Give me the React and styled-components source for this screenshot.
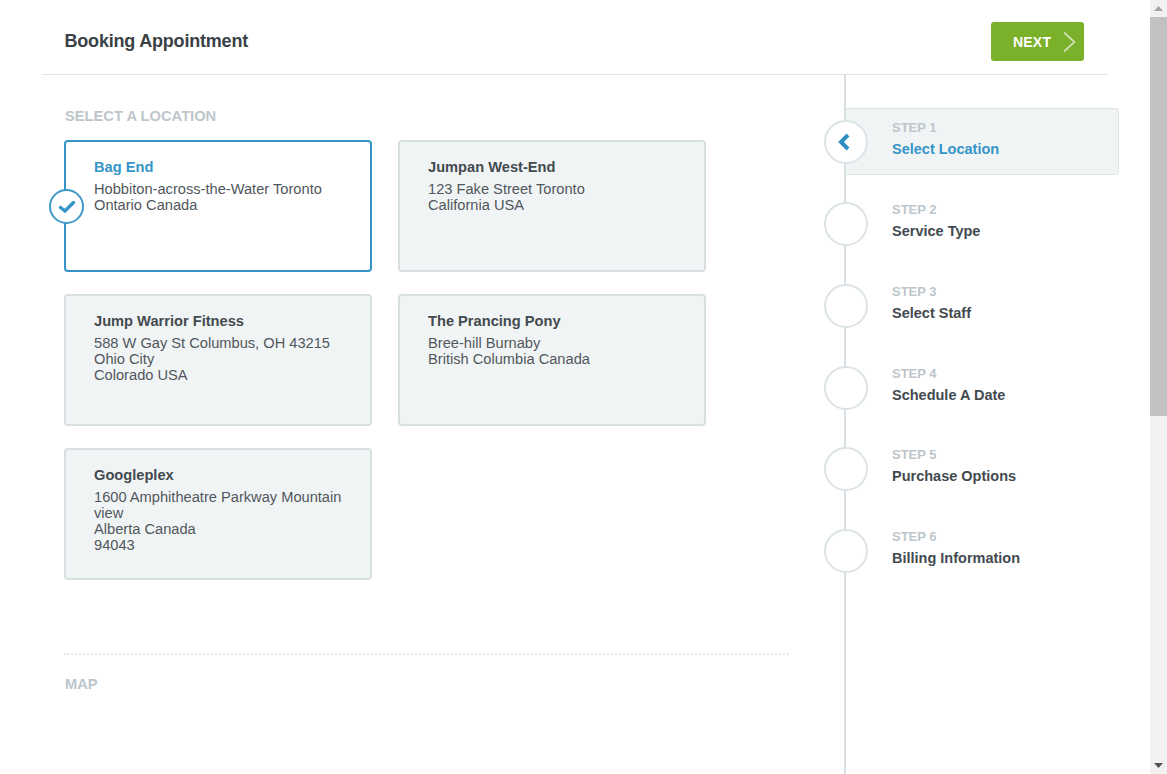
import React from 'react';
import styled, { createGlobalStyle } from 'styled-components';

const GlobalStyle = createGlobalStyle`
  html, body {
    margin: 0;
    height: 100%;
    overflow: hidden;
    background: #ffffff;
    font-family: "Liberation Sans", Arial, sans-serif;
    color: #434a4f;
  }
`

const Page = styled.div`
  display: flex;
  height: 774px;
  overflow: hidden;
`
const Shell = styled.div`
  width: 1150px;
  display: flex;
  flex-direction: column;
`
const Header = styled.header`
  height: 75px;
  margin: 0 42px;
  box-sizing: border-box;
  border-bottom: 1px solid #dde2e4;
  display: flex;
  align-items: center;
  justify-content: space-between;
  padding: 10px 24px 0 22.5px;
`
const Title = styled.h1`
  margin: 0 0 3px;
  font-size: 18px;
  line-height: 24px;
  font-weight: bold;
  letter-spacing: -0.2px;
  color: #3a4145;
`
const NextButton = styled.button`
  width: 93px;
  height: 39px;
  margin-top: -1px;
  border: 0;
  border-radius: 3px;
  background: #7ab02a;
  color: #ffffff;
  font-family: inherit;
  font-size: 14px;
  font-weight: bold;
  letter-spacing: 0.2px;
  display: flex;
  align-items: center;
  padding: 0 8px 0 22px;
  justify-content: space-between;
`
const Body = styled.div`
  flex: 1;
  display: flex;
  min-height: 0;
`
const Main = styled.main`
  width: 725px;
  margin: 0 55px 0 64px;
  display: flex;
  flex-direction: column;
`
const SectionLabel = styled.h2`
  margin: 0;
  padding: ${props => props.top}px 0 0 1px;
  font-size: 14.7px;
  line-height: 20px;
  font-weight: bold;
  color: #bdc6cb;
`
const CardGrid = styled.div`
  display: grid;
  grid-template-columns: 308px 308px;
  grid-auto-rows: 132px;
  column-gap: 26px;
  row-gap: 22px;
  margin-top: 14px;
`
const Card = styled.div`
  position: relative;
  box-sizing: border-box;
  padding: 17px 28px 0;
  border: 2px solid ${props => props.selected ? "#3595c8" : "#d8dfe2"};
  border-radius: 4px;
  background: ${props => props.selected ? "#ffffff" : "#f1f4f5"};
`
const CardName = styled.div`
  font-size: 14.65px;
  line-height: 16px;
  font-weight: bold;
  margin-bottom: 6px;
  color: ${props => props.selected ? "#3595c8" : "#434a4f"};
`
const CardLine = styled.div`
  font-size: 14.65px;
  line-height: 16px;
  color: #50575c;
`
const CheckBadge = styled.span`
  position: absolute;
  left: -17px;
  top: 47px;
  width: 35px;
  height: 35px;
  box-sizing: border-box;
  border: 2px solid #3f9ac9;
  border-radius: 50%;
  background: #ffffff;
  display: flex;
  align-items: center;
  justify-content: center;
`
const Divider = styled.div`
  margin-top: 73px;
  border-top: 2px dotted #e4e8ea;
`
const Sidebar = styled.aside`
  width: 275px;
  border-left: 2px solid #d8dfe2;
  box-sizing: border-box;
  padding-top: 33px;
  display: flex;
  flex-direction: column;
  flex-shrink: 0;
  height: 699px;
`
const Step = styled.div`
  display: flex;
  align-items: center;
  box-sizing: border-box;
  height: ${props => props.active ? 67 : 81.75}px;
  margin-bottom: ${props => props.active ? 8.25 : 0}px;
  border: ${props => props.active ? "1px solid #dde2e4" : "0"};
  border-left: 0;
  border-radius: 0 4px 4px 0;
  background: ${props => props.active ? "#f1f4f5" : "transparent"};
`
const StepCircle = styled.span`
  width: 44px;
  height: 44px;
  flex-shrink: 0;
  box-sizing: border-box;
  margin-left: -22px;
  border: 2px solid #dce3e6;
  border-radius: 50%;
  background: #ffffff;
  display: flex;
  align-items: center;
  justify-content: center;
`
const BackIcon = styled.svg`
  margin-right: 5px;
`
const StepText = styled.div`
  margin: 0 0 6px 24px;
`
const StepNumber = styled.div`
  font-size: 13px;
  line-height: 14px;
  font-weight: bold;
  color: #bdc6cb;
`
const StepName = styled.div`
  margin-top: 6px;
  font-size: 14.5px;
  line-height: 16px;
  font-weight: bold;
  color: ${props => props.active ? "#3595c8" : "#434a4f"};
`
const ScrollBar = styled.div`
  width: 17px;
  background: #f1f1f1;
  display: flex;
  flex-direction: column;
  align-items: center;
`
const ScrollArrow = styled.div`
  height: 17px;
  flex-shrink: 0;
  display: flex;
  align-items: center;
  justify-content: center;
`
const ScrollThumb = styled.div`
  width: 100%;
  height: 399px;
  background: #c1c1c1;
`
const ScrollTrack = styled.div`
  flex: 1;
`

const locations = [
  { name: "Bag End", lines: ["Hobbiton-across-the-Water Toronto", "Ontario Canada"], selected: true },
  { name: "Jumpan West-End", lines: ["123 Fake Street Toronto", "California USA"] },
  { name: "Jump Warrior Fitness", lines: ["588 W Gay St Columbus, OH 43215", "Ohio City", "Colorado USA"] },
  { name: "The Prancing Pony", lines: ["Bree-hill Burnaby", "British Columbia Canada"] },
  { name: "Googleplex", lines: ["1600 Amphitheatre Parkway Mountain", "view", "Alberta Canada", "94043"] },
];

const steps = ["Select Location", "Service Type", "Select Staff", "Schedule A Date", "Purchase Options", "Billing Information"];

function App() {
  return (
    <Page>
      <GlobalStyle />
      <Shell>
        <Header>
          <Title>Booking Appointment</Title>
          <NextButton>
            NEXT
            <svg width="14" height="22" viewBox="0 0 14 22" fill="none">
              <path d="M2 1.5 L12.5 11 L2 20.5" stroke="#d0e1b6" strokeWidth="1.7" />
            </svg>
          </NextButton>
        </Header>
        <Body>
          <Main>
            <SectionLabel top={31}>SELECT A LOCATION</SectionLabel>
            <CardGrid>
              {locations.map(loc => (
                <Card key={loc.name} selected={loc.selected}>
                  <CardName selected={loc.selected}>{loc.name}</CardName>
                  {loc.lines.map(line => <CardLine key={line}>{line}</CardLine>)}
                  {loc.selected && (
                    <CheckBadge>
                      <svg width="18" height="14" viewBox="0 0 18 14" fill="none">
                        <path d="M2.5 7.5 L7 11 L15.5 2.5" stroke="#3595c8" strokeWidth="3.4" strokeLinecap="round" />
                      </svg>
                    </CheckBadge>
                  )}
                </Card>
              ))}
            </CardGrid>
            <Divider />
            <SectionLabel top={19}>MAP</SectionLabel>
          </Main>
          <Sidebar>
            {steps.map((name, i) => (
              <Step key={name} active={i === 0}>
                <StepCircle>
                  {i === 0 && (
                    <BackIcon width="14" height="20" viewBox="0 0 14 20" fill="none">
                      <path d="M11 3 L4 10 L11 17" stroke="#2f8fc4" strokeWidth="4" />
                    </BackIcon>
                  )}
                </StepCircle>
                <StepText>
                  <StepNumber>STEP {i + 1}</StepNumber>
                  <StepName active={i === 0}>{name}</StepName>
                </StepText>
              </Step>
            ))}
          </Sidebar>
        </Body>
      </Shell>
      <ScrollBar>
        <ScrollArrow>
          <svg width="9" height="5" viewBox="0 0 9 5"><path d="M4.5 0 L9 5 L0 5 Z" fill="#a3a3a3" /></svg>
        </ScrollArrow>
        <ScrollThumb />
        <ScrollTrack />
        <ScrollArrow>
          <svg width="9" height="5" viewBox="0 0 9 5"><path d="M0 0 L9 0 L4.5 5 Z" fill="#505050" /></svg>
        </ScrollArrow>
      </ScrollBar>
    </Page>
  );
}

export default App;
